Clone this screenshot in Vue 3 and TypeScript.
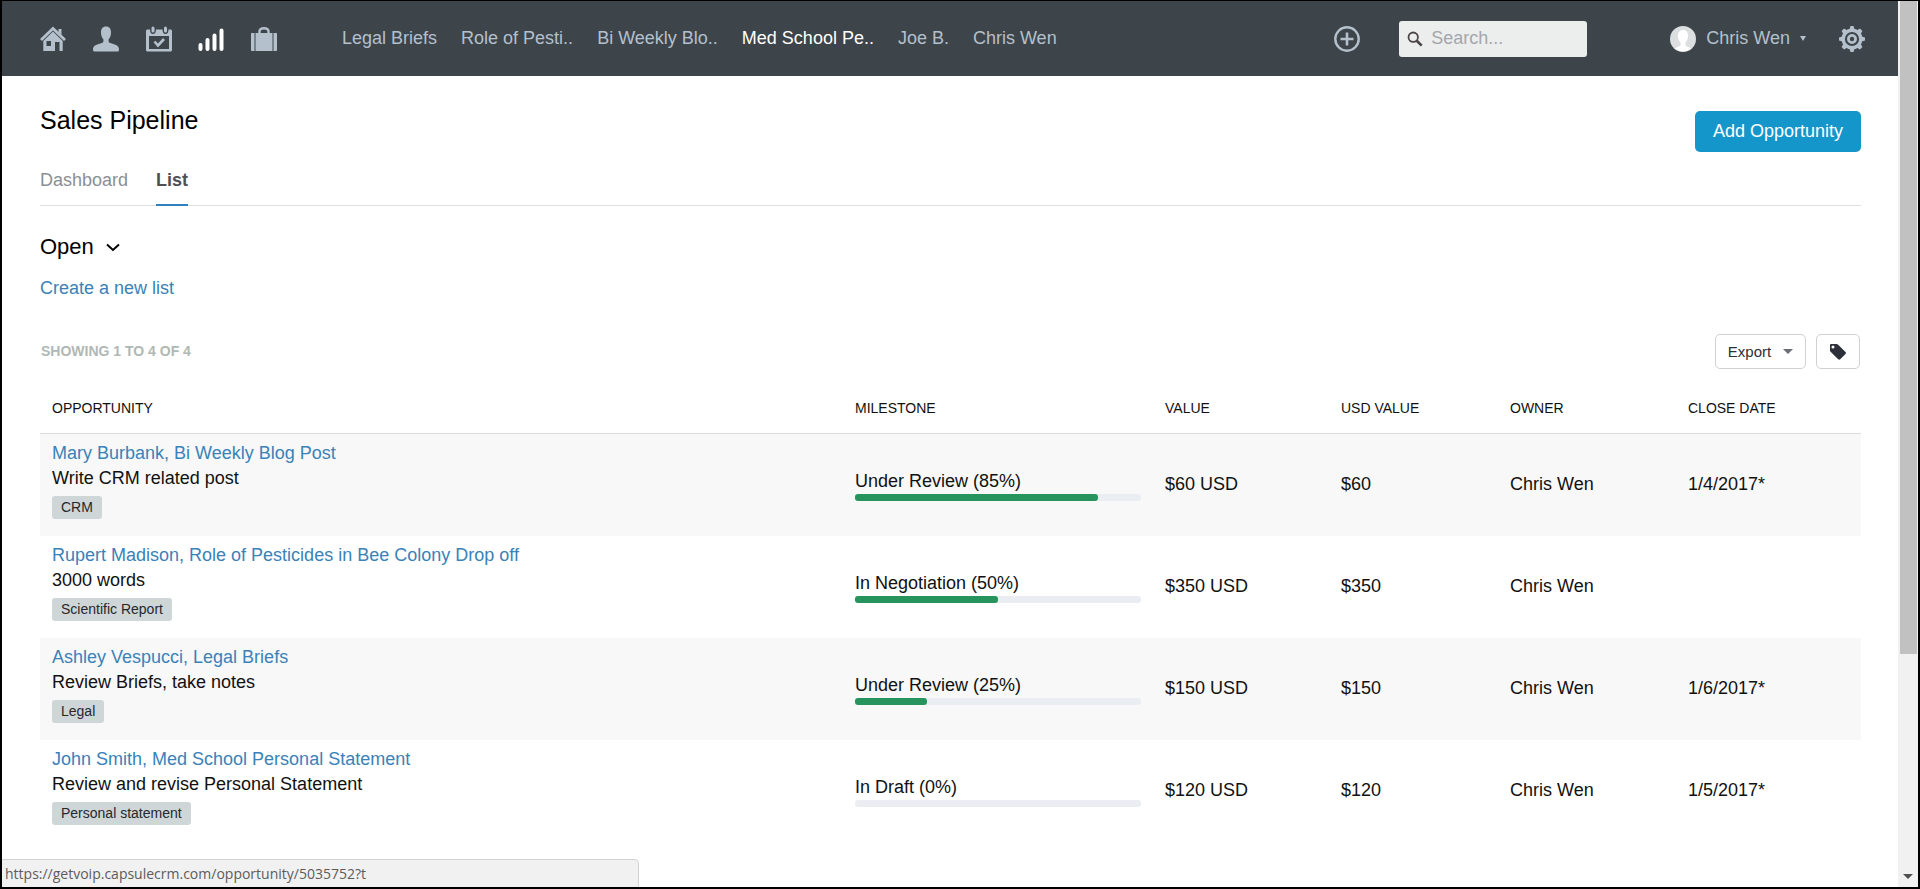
<script setup lang="ts">
interface Opportunity {
  title: string
  description: string
  tag: string
  milestone: string
  percent: number
  value: string
  usd: string
  owner: string
  close: string
}

const recent = [
  { label: 'Legal Briefs', active: false },
  { label: 'Role of Pesti..', active: false },
  { label: 'Bi Weekly Blo..', active: false },
  { label: 'Med School Pe..', active: true },
  { label: 'Joe B.', active: false },
  { label: 'Chris Wen', active: false },
]

const opportunities: Opportunity[] = [
  { title: 'Mary Burbank, Bi Weekly Blog Post', description: 'Write CRM related post', tag: 'CRM', milestone: 'Under Review', percent: 85, value: '$60 USD', usd: '$60', owner: 'Chris Wen', close: '1/4/2017*' },
  { title: 'Rupert Madison, Role of Pesticides in Bee Colony Drop off', description: '3000 words', tag: 'Scientific Report', milestone: 'In Negotiation', percent: 50, value: '$350 USD', usd: '$350', owner: 'Chris Wen', close: '' },
  { title: 'Ashley Vespucci, Legal Briefs', description: 'Review Briefs, take notes', tag: 'Legal', milestone: 'Under Review', percent: 25, value: '$150 USD', usd: '$150', owner: 'Chris Wen', close: '1/6/2017*' },
  { title: 'John Smith, Med School Personal Statement', description: 'Review and revise Personal Statement', tag: 'Personal statement', milestone: 'In Draft', percent: 0, value: '$120 USD', usd: '$120', owner: 'Chris Wen', close: '1/5/2017*' },
]
</script>

<template>
  <div class="window">
    <div class="page">
      <header class="topbar">
        <nav class="icons" aria-label="Main">
          <a href="#" aria-label="Home">
            <svg viewBox="0 0 26 26"><path d="M18.500 3h3v6l-3-3z" fill="currentColor" /><path d="M1 14 13 2.400 25 14" fill="none" stroke="currentColor" stroke-width="2.800" /><path d="M3.300 15 13 5.600 22.700 15v10H19.500v-9H15v9H3.300zM6.500 15v5H11v-5z" fill="currentColor" fill-rule="evenodd" /></svg>
          </a>
          <a href="#" aria-label="People">
            <svg viewBox="0 0 26 26"><path d="M13 .5c3.400 0 5 2.400 5 5.700 0 3-.8 5.500-2.400 7v2.300c0 1 1.400 1.500 4 2.200 4 1.100 6.400 2.600 6.400 5.800 0 1.200-.4 2-1.200 2H1.200C.4 25.500 0 24.700 0 23.500c0-3.200 2.400-4.700 6.400-5.800 2.600-.7 4-1.200 4-2.200v-2.300C8.800 11.700 8 9.200 8 6.200 8 2.900 9.600.5 13 .5z" fill="currentColor" /></svg>
          </a>
          <a href="#" aria-label="Calendar">
            <svg viewBox="0 0 26 26"><path d="M1.500 3.500H4c0 3 1.200 4.500 3 4.500s3-1.500 3-4.500h6.500c0 3 1.200 4.500 3 4.500s3-1.500 3-4.500h2c.8 0 1.500.7 1.500 1.500v19c0 .8-.7 1.500-1.500 1.500h-23C.7 25.500 0 24.800 0 24V5c0-.8.7-1.500 1.500-1.500zM3 10v13h20V10z" fill="currentColor" fill-rule="evenodd" /><path d="M7 2v3M19.500 2v3" stroke="currentColor" stroke-width="3" stroke-linecap="round" /><path d="m8.500 15.500 3.500 4 6-6.500" fill="none" stroke="currentColor" stroke-width="2.600" /></svg>
          </a>
          <a href="#" aria-label="Sales" class="on">
            <svg viewBox="0 0 26 26"><g stroke="currentColor" stroke-width="4" stroke-linecap="round"><path d="M2.500 19v4M9.500 14v9M16.500 9.500V23M23.500 4.500V23" /></g></svg>
          </a>
          <a href="#" aria-label="Cases">
            <svg viewBox="0 0 26 26"><path d="M8.500 8V5.500C8.500 3.500 10 2.200 13 2.200s4.500 1.300 4.500 3.300V8" fill="none" stroke="currentColor" stroke-width="2.400" /><path d="M1 7h2.500v18H1c-.6 0-1-.4-1-1V8c0-.6.400-1 1-1zM4.500 7h17v18h-17zM22.500 7H25c.6 0 1 .4 1 1v16c0 .6-.4 1-1 1h-2.500z" fill="currentColor" /></svg>
          </a>
        </nav>
        <nav class="recent" aria-label="Recent">
          <a v-for="item in recent" :key="item.label" href="#" :class="{ on: item.active }">{{ item.label }}</a>
        </nav>
        <button class="icon-button" type="button" aria-label="Add">
          <svg viewBox="0 0 26 26"><circle cx="13" cy="13" r="11.700" fill="none" stroke="currentColor" stroke-width="2.400" /><path d="M13 6.500v13M6.500 13h13" stroke="currentColor" stroke-width="2.600" /></svg>
        </button>
        <label class="search">
          <svg viewBox="0 0 18 18"><circle cx="7" cy="7" r="5.300" fill="none" stroke="currentColor" stroke-width="2" /><path d="m11 11 5.500 5.500" stroke="currentColor" stroke-width="3" /></svg>
          <input type="search" placeholder="Search..." aria-label="Search">
        </label>
        <button class="user" type="button">
          <svg class="avatar" viewBox="0 0 26 26"><circle cx="13" cy="13" r="13" fill="#dcdfdf" /><path d="M13 4c3.500 0 5 2.500 5 6 0 3-1 5-2.500 6.500v3c1 1 4 1.500 5.500 3A13 13 0 0 1 5 22.500c1.500-1.500 4.500-2 5.500-3v-3C9 15 8 13 8 10c0-3.500 1.500-6 5-6z" fill="#fff" /></svg>
          <span>Chris Wen</span>
          <svg class="caret" viewBox="0 0 6 5"><path d="M0 0h6L3 5z" fill="currentColor" /></svg>
        </button>
        <button class="icon-button" type="button" aria-label="Settings">
          <svg viewBox="0 0 26 26"><g fill="none" stroke="currentColor"><circle cx="13" cy="13" r="8.800" stroke-width="3.400" /><circle cx="13" cy="13" r="3.600" stroke-width="2.800" /></g><path d="m10 5 1.500-5h3L16 5zM10 21l1.500 5h3l1.500-5zM5 10l-5 1.500v3L5 16zM21 10l5 1.500v3L21 16zM4.800 9 2.600 5 5 2.600l4 2.200zM21.200 9l2.200-4L21 2.600l-4 2.200zM4.800 17l-2.200 4L5 23.400l4-2.200zM21.200 17l2.200 4-2.400 2.400-4-2.200z" fill="currentColor" /></svg>
        </button>
      </header>

      <main class="content">
        <div class="heading">
          <h1>Sales Pipeline</h1>
          <button class="primary" type="button">Add Opportunity</button>
        </div>
        <nav class="tabs" aria-label="Views">
          <a href="#">Dashboard</a>
          <a href="#" class="current">List</a>
        </nav>
        <button class="list-picker" type="button">
          <span>Open</span>
          <svg viewBox="0 0 14 9"><path d="m1 1.500 6 5.500 6-5.500" fill="none" stroke="currentColor" stroke-width="2" /></svg>
        </button>
        <a class="create" href="#">Create a new list</a>

        <div class="toolbar">
          <span class="count">SHOWING 1 TO 4 OF 4</span>
          <button class="outline export" type="button">
            Export
            <svg viewBox="0 0 10 5"><path d="M0 0h10L5 5z" fill="#6b6d78" /></svg>
          </button>
          <button class="outline tagger" type="button" aria-label="Tag">
            <svg viewBox="0 0 16 16"><path d="M0 1.200C0 .5.500 0 1.200 0h5.300c.6 0 1 .2 1.400.6l7.600 7.400c.6.600.6 1.300 0 1.900l-5.300 5.400c-.6.600-1.400.6-2 0L.6 7.800C.2 7.400 0 7 0 6.500zM3 1.600a1.500 1.500 0 1 0 0 3 1.500 1.500 0 0 0 0-3z" fill="currentColor" fill-rule="evenodd" /></svg>
          </button>
        </div>

        <table>
          <colgroup>
            <col>
            <col class="c-milestone">
            <col class="c-value">
            <col class="c-usd">
            <col class="c-owner">
            <col class="c-close">
          </colgroup>
          <thead>
            <tr>
              <th>OPPORTUNITY</th>
              <th>MILESTONE</th>
              <th>VALUE</th>
              <th>USD VALUE</th>
              <th>OWNER</th>
              <th>CLOSE DATE</th>
            </tr>
          </thead>
          <tbody>
            <tr v-for="o in opportunities" :key="o.title">
              <td class="summary">
                <a href="#">{{ o.title }}</a>
                <p>{{ o.description }}</p>
                <span class="tag">{{ o.tag }}</span>
              </td>
              <td>
                <div>{{ o.milestone }} ({{ o.percent }}%)</div>
                <div class="track"><div class="fill" :style="{ width: o.percent + '%' }"></div></div>
              </td>
              <td>{{ o.value }}</td>
              <td>{{ o.usd }}</td>
              <td>{{ o.owner }}</td>
              <td>{{ o.close }}</td>
            </tr>
          </tbody>
        </table>
      </main>
    </div>

    <div class="scrollbar" aria-hidden="true">
      <div class="thumb"></div>
      <svg viewBox="0 0 10 5"><path d="M0 0h10L5 5z" fill="#505050" /></svg>
    </div>
    <div class="status">https://getvoip.capsulecrm.com/opportunity/5035752?t</div>
  </div>
</template>

<style>
body {
  margin: 0;
}
</style>

<style scoped>
* {
  box-sizing: border-box;
}
.window {
  position: relative;
  display: flex;
  min-height: 100vh;
  border: solid #000;
  border-width: 1px 2px 2px;
  background: #fff;
  color: #111;
  font-family: "Liberation Sans", Arial, sans-serif;
  font-size: 18px;
  line-height: 25px;
}
.page {
  flex: 1;
  min-width: 0;
}
a {
  color: #3a82b8;
  text-decoration: none;
}
button {
  margin: 0;
  padding: 0;
  border: 0;
  background: none;
  color: inherit;
  font: inherit;
  cursor: pointer;
}
svg {
  display: block;
}
.topbar {
  display: flex;
  align-items: center;
  height: 75px;
  padding: 0 33px 0 38px;
  background: #3d444a;
  color: #b4c0cc;
}
.topbar a {
  color: inherit;
}
.topbar a.on {
  color: #fff;
}
.icons {
  display: flex;
  justify-content: space-between;
  width: 237px;
}
.icons svg,
.icon-button svg,
.avatar {
  width: 26px;
  height: 26px;
}
.recent {
  display: flex;
  gap: 24px;
  margin: 0 auto 0 65px;
  white-space: nowrap;
}
.search {
  display: flex;
  align-items: center;
  gap: 8px;
  width: 188px;
  height: 36px;
  margin: 0 83px 0 39px;
  padding: 0 8px;
  border-radius: 3px;
  background: #eceeee;
  color: #4b4545;
}
.search svg {
  flex: none;
  width: 16px;
  height: 18px;
}
.search input {
  width: 100%;
  min-width: 0;
  padding: 0;
  border: 0;
  outline: 0;
  background: none;
  font: inherit;
}
.search input::placeholder {
  color: #a4a6ab;
  opacity: 1;
}
.user {
  display: flex;
  align-items: center;
  gap: 10px;
  margin-right: 33px;
}
.caret {
  width: 6px;
  height: 5px;
}
.content {
  padding: 35px 37px 45px 38px;
}
.heading {
  display: flex;
  justify-content: space-between;
  align-items: flex-start;
}
h1 {
  margin: 0;
  font-size: 25px;
  font-weight: 400;
  line-height: 18px;
  color: #000;
}
.primary {
  height: 41px;
  padding: 0 18px;
  border-radius: 5px;
  background: #1496ca;
  color: #fff;
}
.tabs {
  display: flex;
  gap: 28px;
  height: 54px;
  padding-top: 16px;
  border-bottom: 1px solid #dcdedf;
}
.tabs a {
  height: 38px;
  color: #8b8f94;
}
.tabs .current {
  border-bottom: 2px solid #2f80bd;
  color: #4f5053;
  font-weight: 700;
}
.list-picker {
  display: flex;
  align-items: center;
  gap: 12px;
  margin-top: 28px;
  font-size: 22px;
  line-height: 26px;
  color: #000;
}
.list-picker svg {
  width: 14px;
  height: 9px;
}
.create {
  display: block;
  width: fit-content;
  margin-top: 16px;
}
.toolbar {
  display: flex;
  align-items: center;
  gap: 10px;
  margin-top: 33px;
  padding: 0 1px;
}
.count {
  margin-right: auto;
  color: #afb8b5;
  font-size: 14px;
  font-weight: 700;
}
.outline {
  display: flex;
  align-items: center;
  justify-content: center;
  height: 35px;
  border: 1px solid #cfd1d3;
  border-radius: 5px;
  color: #2d3038;
  font-size: 15px;
}
.export {
  gap: 12px;
  width: 91px;
}
.export svg {
  width: 10px;
  height: 5px;
}
.tagger {
  width: 44px;
}
.tagger svg {
  width: 16px;
  height: 16px;
}
table {
  width: 100%;
  margin-top: 15px;
  border-collapse: collapse;
  table-layout: fixed;
}
.c-milestone {
  width: 310px;
}
.c-value {
  width: 176px;
}
.c-usd {
  width: 169px;
}
.c-owner {
  width: 178px;
}
.c-close {
  width: 185px;
}
th {
  height: 49px;
  padding: 0 12px;
  border-bottom: 1px solid #dadcdc;
  font-size: 14px;
  font-weight: 400;
  text-align: left;
}
td {
  padding: 0 12px;
  vertical-align: middle;
}
tbody tr:nth-child(odd) {
  background: #f8f8f8;
}
.summary {
  padding: 7px 12px 17px;
}
.summary a,
.tag {
  display: block;
  width: fit-content;
}
p {
  margin: 0;
}
.tag {
  margin-top: 5px;
  padding: 0 9px;
  border-radius: 3px;
  background: #ced6d8;
  color: #26282c;
  font-size: 14px;
  line-height: 23px;
}
.track {
  height: 7px;
  border-radius: 3px;
  background: #eaedf2;
}
.fill {
  height: 100%;
  border-radius: 3px;
  background: #28945d;
}
.scrollbar {
  display: flex;
  flex-direction: column;
  align-items: center;
  justify-content: space-between;
  width: 20px;
  padding-bottom: 8px;
  background: #f1f1f1;
}
.thumb {
  width: 17px;
  height: 74.4%;
  background: #c1c1c1;
}
.scrollbar svg {
  width: 10px;
  height: 5px;
}
.status {
  position: absolute;
  bottom: 0;
  left: 0;
  width: 637px;
  height: 28px;
  padding-left: 3px;
  border: solid #d2d2d2;
  border-width: 1px 1px 0 0;
  border-radius: 0 5px 0 0;
  background: #f1f1f1;
  color: #5c5c5c;
  font-family: "Open Sans", "Noto Sans", sans-serif;
  font-size: 14px;
  line-height: 27px;
}
</style>
